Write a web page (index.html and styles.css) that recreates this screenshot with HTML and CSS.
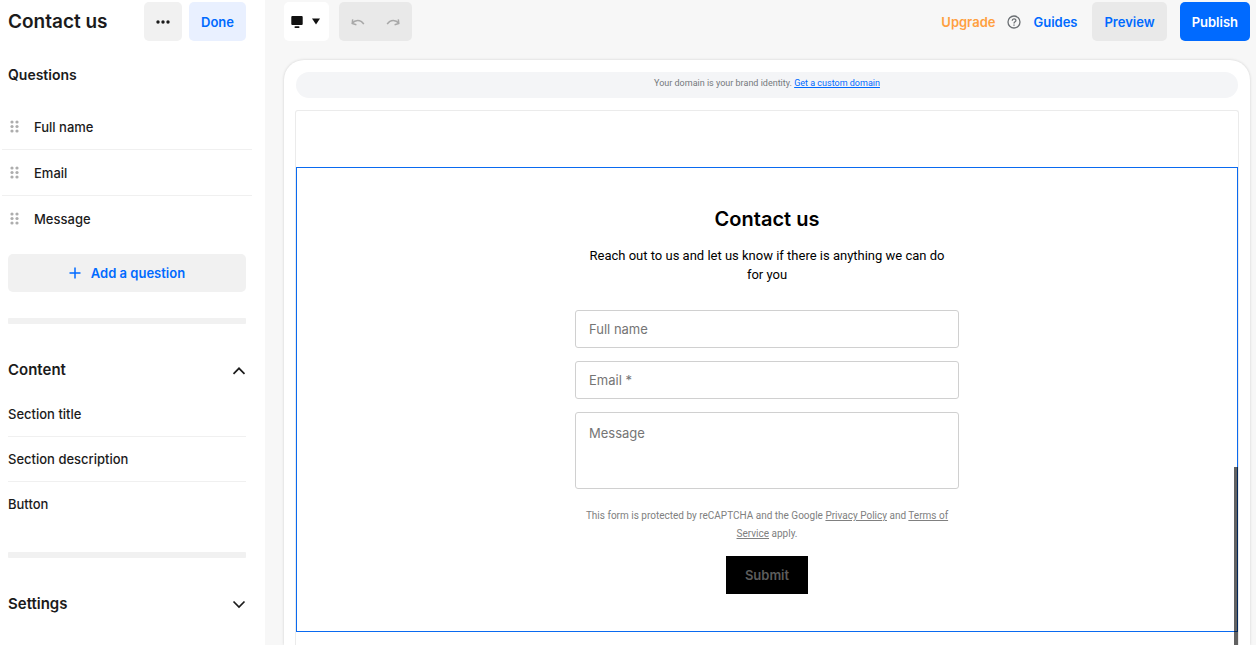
FILE: index.html
```html
<!DOCTYPE html>
<html lang="en">
<head>
<meta charset="utf-8">
<title>Contact us</title>
<link rel="stylesheet" href="styles.css">
</head>
<body>
<div class="app">
  <aside class="sidebar">
    <header class="side-head">
      <h1 class="side-title">Contact us</h1>
      <button class="btn btn-more" type="button" aria-label="More options">
        <svg width="14" height="4" viewBox="0 0 14 4" fill="currentColor"><circle cx="2" cy="2" r="1.7"/><circle cx="7" cy="2" r="1.7"/><circle cx="12" cy="2" r="1.7"/></svg>
      </button>
      <button class="btn btn-done" type="button">Done</button>
    </header>
    <h2 class="side-heading">Questions</h2>
    <ul class="questions">
      <li class="question"><svg class="grip" width="9" height="13" viewBox="0 0 9 13"><circle cx="2" cy="2" r="1.6"/><circle cx="7" cy="2" r="1.6"/><circle cx="2" cy="6.5" r="1.6"/><circle cx="7" cy="6.5" r="1.6"/><circle cx="2" cy="11" r="1.6"/><circle cx="7" cy="11" r="1.6"/></svg>Full name</li>
      <li class="question"><svg class="grip" width="9" height="13" viewBox="0 0 9 13"><circle cx="2" cy="2" r="1.6"/><circle cx="7" cy="2" r="1.6"/><circle cx="2" cy="6.5" r="1.6"/><circle cx="7" cy="6.5" r="1.6"/><circle cx="2" cy="11" r="1.6"/><circle cx="7" cy="11" r="1.6"/></svg>Email</li>
      <li class="question"><svg class="grip" width="9" height="13" viewBox="0 0 9 13"><circle cx="2" cy="2" r="1.6"/><circle cx="7" cy="2" r="1.6"/><circle cx="2" cy="6.5" r="1.6"/><circle cx="7" cy="6.5" r="1.6"/><circle cx="2" cy="11" r="1.6"/><circle cx="7" cy="11" r="1.6"/></svg>Message</li>
    </ul>
    <button class="btn btn-add" type="button">
      <svg width="12" height="12" viewBox="0 0 12 12" stroke="currentColor" stroke-width="1.5" fill="none"><path d="M6 .5v11M.5 6h11"/></svg>
      Add a question
    </button>
    <div class="bar"></div>
    <button class="group" type="button">Content
      <svg width="14" height="10" viewBox="0 0 14 10" fill="none" stroke="currentColor" stroke-width="1.7"><path d="M1.5 8.800 7 3.300 12.500 8.800"/></svg>
    </button>
    <ul class="parts">
      <li class="part">Section title</li>
      <li class="part">Section description</li>
      <li class="part">Button</li>
    </ul>
    <div class="bar"></div>
    <button class="group" type="button">Settings
      <svg width="14" height="10" viewBox="0 0 14 10" fill="none" stroke="currentColor" stroke-width="1.7"><path d="M1.500 2.500 7 8l5.500-5.500"/></svg>
    </button>
  </aside>

  <main class="editor">
    <div class="toolbar">
      <button class="btn btn-device" type="button" aria-label="Device view">
        <svg width="12" height="14" viewBox="0 0 12 14" fill="currentColor"><rect x="0.300" y="1" width="11.400" height="9" rx="1"/><rect x="3.500" y="11.300" width="5" height="1.700" rx=".8"/></svg>
        <svg width="8" height="7" viewBox="0 0 8 7" fill="currentColor"><path d="M0 .5h8L4 6.500z"/></svg>
      </button>
      <div class="history">
        <button class="step" type="button" aria-label="Undo" disabled>
          <svg width="14" height="10" viewBox="0 0 14 10" fill="none" stroke="currentColor" stroke-width="1.500"><path d="M1.200 6.200C4 2.600 9.500 2 12.800 7.100M1.700 2.300l-.5 4.200 4.200 1.200"/></svg>
        </button>
        <button class="step" type="button" aria-label="Redo" disabled>
          <svg width="14" height="10" viewBox="0 0 14 10" fill="none" stroke="currentColor" stroke-width="1.500"><path d="M12.800 6.200C10 2.600 4.500 2 1.200 7.100M12.300 2.300l.5 4.200-4.200 1.200"/></svg>
        </button>
      </div>
      <nav class="actions">
        <a class="action upgrade" href="#">Upgrade</a>
        <button class="help" type="button" aria-label="Help">
          <svg width="14" height="14" viewBox="0 0 14 14" fill="none" stroke="currentColor" stroke-width="1.300"><circle cx="7" cy="7" r="6"/><path d="M5.200 5.700c0-2.500 3.700-2.400 3.700-.3C8.900 6.800 7 6.700 7 8.400"/><path d="M7 9.500v1.300"/></svg>
        </button>
        <a class="action" href="#">Guides</a>
      </nav>
      <button class="btn btn-preview" type="button">Preview</button>
      <button class="btn btn-publish" type="button">Publish</button>
    </div>

    <div class="canvas">
      <p class="domain">Your domain is your brand identity. <a href="#">Get a custom domain</a></p>
      <div class="site">
        <section class="section">
          <form class="form">
            <h2 class="form-title">Contact us</h2>
            <p class="form-text">Reach out to us and let us know if there is anything we can do for you</p>
            <input class="field" type="text" placeholder="Full name" aria-label="Full name">
            <input class="field" type="email" placeholder="Email *" aria-label="Email">
            <textarea class="field area" placeholder="Message" aria-label="Message"></textarea>
            <p class="legal">This form is protected by reCAPTCHA and the Google <a href="#">Privacy Policy</a> and <a href="#">Terms of Service</a> apply.</p>
            <button class="submit" type="submit" disabled>Submit</button>
          </form>
        </section>
        <div class="thumb"></div>
      </div>
    </div>
  </main>
</div>
</body>
</html>
```

FILE: styles.css
```css
* { box-sizing: border-box; }

body {
  margin: 0;
  font-family: Inter, "Liberation Sans", sans-serif;
  font-size: 13px;
  line-height: 18px;
  color: #1b1b1b;
  background: #f7f7f7;
}

h1, h2, p, ul { margin: 0; padding: 0; }
ul { list-style: none; }
svg { display: block; flex: none; }
button, input, textarea { font: inherit; }

.app {
  display: flex;
  height: 100vh;
  overflow: hidden;
}

.sidebar {
  flex: 0 0 265px;
  padding: 2px 19px 0 8px;
  background: #fff;
  overflow: hidden;
}

.btn {
  display: flex;
  align-items: center;
  justify-content: center;
  height: 39px;
  border: 0;
  border-radius: 5px;
  padding: 0 12px;
  font-weight: 600;
  color: #006aff;
  background: #f1f1f1;
}

.side-head { display: flex; gap: 7px; }
.side-title {
  flex: 1;
  font-size: 19px;
  line-height: 39px;
  font-weight: 600;
}
.btn-more { width: 38px; padding: 0; color: #1b1b1b; }
.btn-done { background: #e9f0ff; }

.side-heading {
  margin-top: 24px;
  font-size: 14px;
  line-height: 20px;
  font-weight: 600;
}

.questions { margin: 19px -6px 12px; }
.question {
  display: flex;
  align-items: center;
  gap: 15px;
  height: 46px;
  padding-left: 8px;
  border-bottom: 1px solid #f0f0f0;
  font-weight: 500;
}
.question:last-child { border-bottom-color: transparent; }
.grip { fill: #adadad; }

.btn-add {
  width: 100%;
  height: 38px;
  gap: 10px;
  margin-bottom: 26px;
}

.bar {
  height: 6px;
  margin-bottom: 34px;
  border-radius: 1px;
  background: #f1f1f1;
}

.group {
  display: flex;
  align-items: center;
  justify-content: space-between;
  width: 100%;
  height: 24px;
  border: 0;
  padding: 0;
  background: none;
  color: #1b1b1b;
  font-size: 15px;
  font-weight: 600;
}

.parts { margin: 10px 0 25px; }
.part {
  height: 45px;
  padding: 13px 0;
  border-bottom: 1px solid #f0f0f0;
  font-weight: 500;
}
.part:last-child { border-bottom: 0; }

.editor {
  flex: 1;
  display: flex;
  flex-direction: column;
  min-width: 0;
  padding: 2px 6px 0 19px;
}

.toolbar { display: flex; }
.btn-device {
  justify-content: flex-start;
  gap: 9px;
  padding: 0 7px;
  width: 45px;
  color: #111;
  background: #fff;
}
.history {
  display: flex;
  align-items: center;
  gap: 21px;
  margin-left: 10px;
  padding: 0 12px;
  border-radius: 5px;
  background: #e9e9e9;
}
.step {
  border: 0;
  padding: 0;
  background: none;
  color: #a8a8a8;
}
.actions {
  display: flex;
  align-items: center;
  gap: 12px;
  margin-left: auto;
}
.action {
  font-weight: 600;
  color: #006aff;
  text-decoration: none;
}
.upgrade { color: #ff9f40; }
.help {
  border: 0;
  padding: 0;
  background: none;
  color: #6b6f73;
}
.btn-preview { margin: 0 13px 0 15px; background: #e9e9e9; }
.btn-publish { color: #fff; background: #006aff; }

.canvas {
  flex: 1;
  display: flex;
  flex-direction: column;
  min-height: 0;
  margin-top: 19px;
  padding: 12px 12px 0;
  border-radius: 20px 20px 0 0;
  background: #fff;
  box-shadow: 0 0 3px rgba(0, 0, 0, 0.16);
}

.domain {
  padding: 2px 0 6px;
  border-radius: 13px;
  background: #f4f5f7;
  color: #75797d;
  font-family: Roboto, "Liberation Sans", sans-serif;
  font-size: 9px;
  text-align: center;
}
.domain a { color: #006aff; }

.site {
  position: relative;
  flex: 1;
  min-height: 0;
  margin: 12px -1px 0;
  padding-top: 56px;
  border: 1px solid #ebebeb;
  border-bottom: 0;
  border-radius: 3px 3px 0 0;
  overflow: hidden;
}

.section {
  display: flex;
  justify-content: center;
  padding: 39px 16px 37px;
  border: 1px solid #0a6af0;
  color: #000;
}

.thumb {
  position: absolute;
  top: calc(200% / 3);
  right: 0;
  bottom: 0;
  width: 4px;
  background: rgba(0, 0, 0, 0.62);
}

.form {
  display: flex;
  flex-direction: column;
  align-items: center;
  width: 384px;
}
.form-title {
  font-size: 20px;
  line-height: 24px;
  font-weight: 600;
}
.form-text {
  margin: 15px 0 26px;
  padding: 0 8px;
  font-family: Roboto, "Liberation Sans", sans-serif;
  line-height: 19px;
  text-align: center;
}

.field {
  width: 100%;
  height: 38px;
  margin: 0 0 13px;
  padding: 0 13px;
  border: 1px solid #d0d0d0;
  border-radius: 3px;
  background: #fff;
  color: #000;
}
.field::placeholder { color: #757575; opacity: 1; }
.area {
  height: 77px;
  padding: 11px 13px;
  margin-bottom: 18px;
  resize: none;
}

.legal {
  padding: 0 8px;
  font-family: Roboto, "Liberation Sans", sans-serif;
  font-size: 10px;
  color: #808080;
  text-align: center;
}
.legal a { color: inherit; }

.submit {
  height: 38px;
  margin-top: 13px;
  padding: 0 19px;
  border: 0;
  background: #000;
  color: #5c5c5c;
  font-weight: 600;
}
```
